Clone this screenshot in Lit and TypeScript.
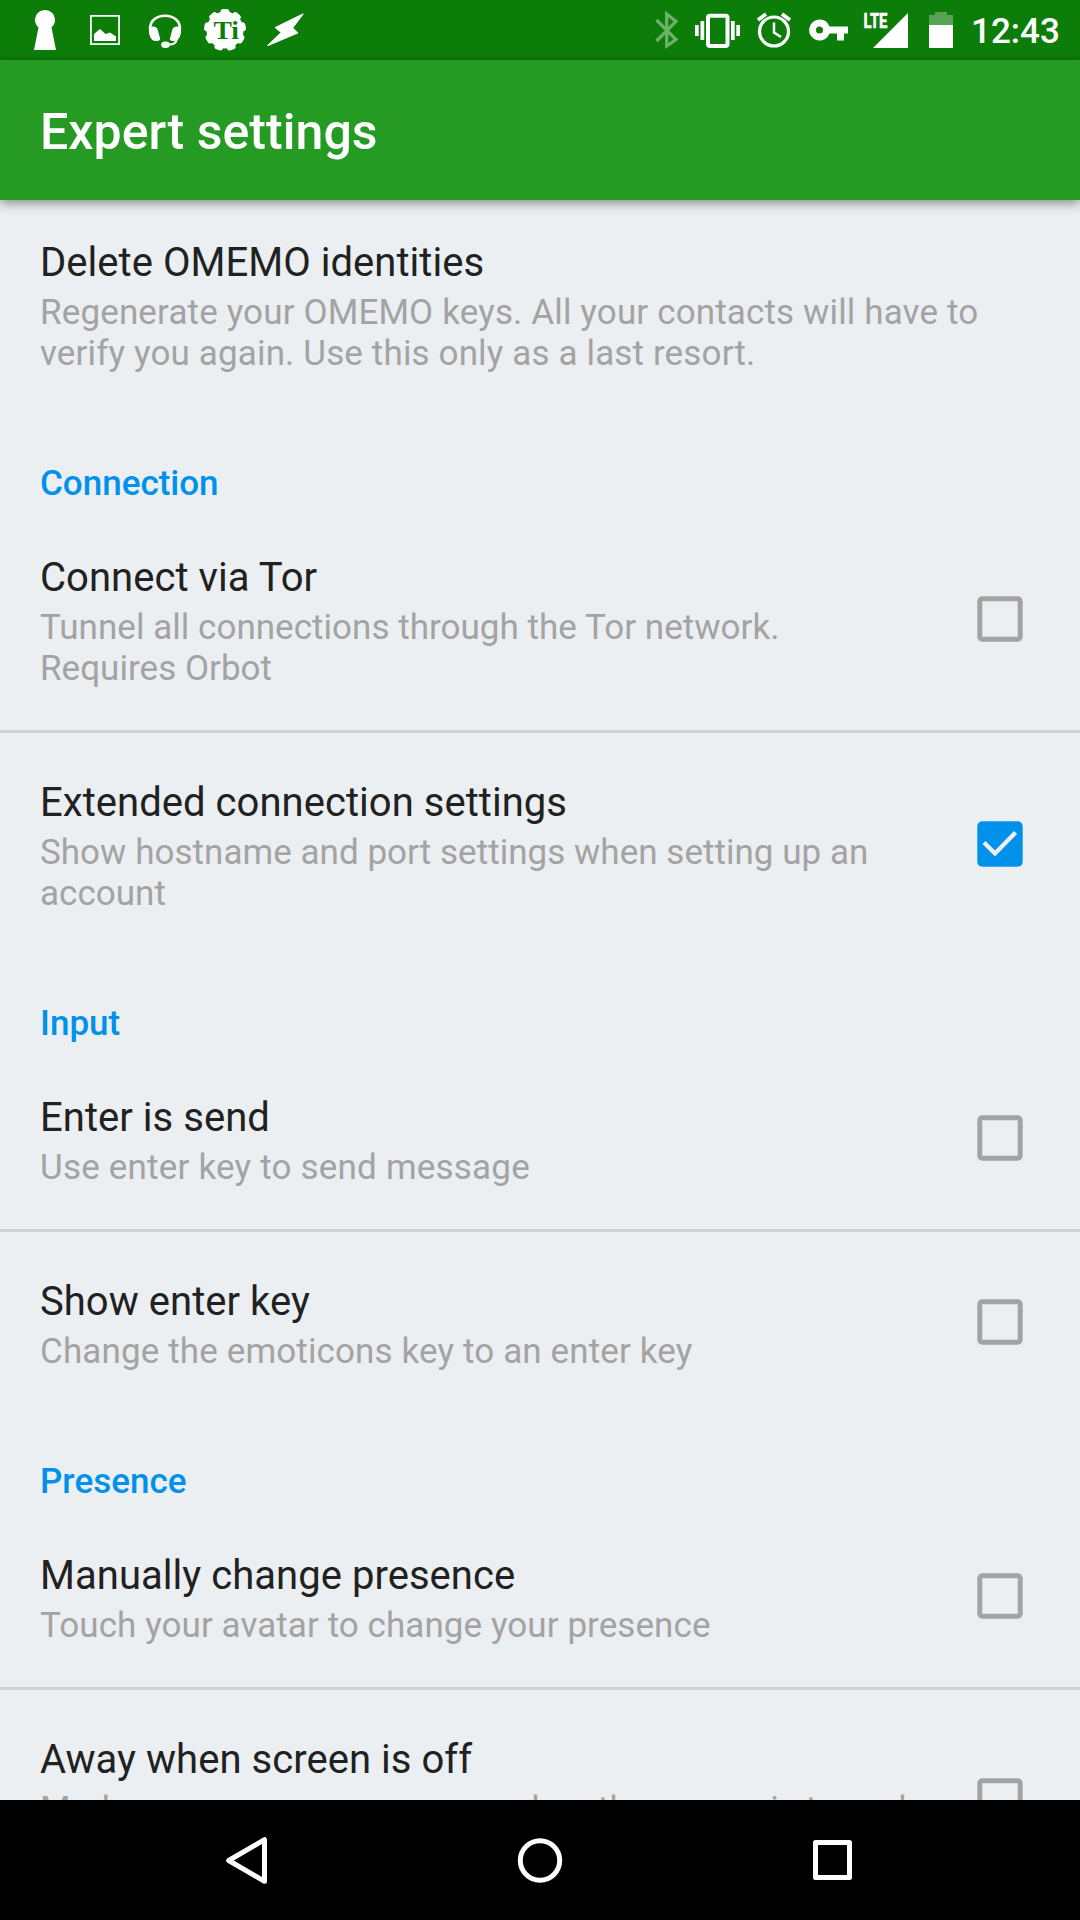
import { LitElement, html, css, svg, nothing } from "lit";
import { customElement, property } from "lit/decorators.js";
import { styleMap } from "lit/directives/style-map.js";

interface Setting {
  title: string;
  summary: string;
  tracking: number;
  checked?: boolean;
}

interface Section {
  heading?: string;
  items: Setting[];
}

const SECTIONS: Section[] = [
  {
    items: [
      {
        title: "Delete OMEMO identities",
        summary:
          "Regenerate your OMEMO keys. All your contacts will have to verify you again. Use this only as a last resort.",
        tracking: 0.14,
      },
    ],
  },
  {
    heading: "Connection",
    items: [
      {
        title: "Connect via Tor",
        summary: "Tunnel all connections through the Tor network. Requires Orbot",
        tracking: 0.03,
        checked: false,
      },
      {
        title: "Extended connection settings",
        summary: "Show hostname and port settings when setting up an account",
        tracking: 0.03,
        checked: true,
      },
    ],
  },
  {
    heading: "Input",
    items: [
      {
        title: "Enter is send",
        summary: "Use enter key to send message",
        tracking: 0.2,
        checked: false,
      },
      {
        title: "Show enter key",
        summary: "Change the emoticons key to an enter key",
        tracking: 0.13,
        checked: false,
      },
    ],
  },
  {
    heading: "Presence",
    items: [
      {
        title: "Manually change presence",
        summary: "Touch your avatar to change your presence",
        tracking: 0.07,
        checked: false,
      },
      {
        title: "Away when screen is off",
        summary: "Marks your resource as away when the screen is turned off",
        tracking: 0.12,
        checked: false,
      },
    ],
  },
];

const gearTeeth = Array.from({ length: 9 }, (_, i) => i * 40);

@customElement("status-bar")
export class StatusBar extends LitElement {
  static styles = css`
    :host {
      display: flex;
      justify-content: space-between;
      height: 60px;
      background: #0d7d0a;
      color: #fff;
    }
    .icons {
      display: block;
      height: 60px;
      fill: #fff;
    }
    .gear {
      font: bold 26px "Liberation Serif", serif;
      fill: #0d7d0a;
    }
    .lte {
      font: 700 21px Roboto, sans-serif;
      stroke: #fff;
      stroke-width: 0.6px;
    }
    .right {
      display: flex;
    }
    .clock {
      width: 109px;
      font: 500 35px/60px Roboto, sans-serif;
      padding-top: 2px;
      box-sizing: border-box;
    }
  `;

  render() {
    return html`
      <svg class="icons" width="340" viewBox="0 0 340 60">
        <path d="M45 10a10 10 0 0 1 6.500 17.500L56 50H34l4.500-22.500A10 10 0 0 1 45 10z" />
        <path fill-rule="evenodd" d="M90 15h30v30H90zM91.800 16.800v26.400h26.400V16.800z" />
        <path d="M94 41v-7l6-5 5.500 5 4.500-1.500 6 4V41z" />
        <path d="M150.200 30c-2-19 31.600-19 29.600 0" fill="none" stroke="#fff" stroke-width="2.600" />
        <path d="M151.500 27l-2.500 2.500c-.5 5 2 11.500 6.500 11.500 4.500 0 5.500-1 4-4.500l-2-7.500c-1-2-4-3-6-2z" />
        <path d="M178.500 27l2.500 2.500c.5 5-2 11.500-6.500 11.500-4.500 0-5.500-1-4-4.500l2-7.500c1-2 4-3 6-2z" />
        <path d="M177 39c-.5 3.500-3.500 5.500-8 5.500" fill="none" stroke="#fff" stroke-width="1.800" />
        <ellipse cx="165.500" cy="44.700" rx="4.300" ry="3.200" />
        <circle cx="225" cy="30" r="18.500" />
        ${gearTeeth.map(
          (a) => svg`<rect x="220.500" y="9" width="9" height="11" rx="3" transform="rotate(${a} 225 30)" />`
        )}
        <text class="gear" x="213.500" y="39" textLength="25.500" lengthAdjust="spacingAndGlyphs">Ti</text>
        <path
          d="M303 14L275.500 27.500l6 5-13.500 13 29.500-12.500-5-5z"
          stroke="#fff"
          stroke-width="1.200"
          stroke-linejoin="round"
        />
      </svg>
      <div class="right">
        <svg class="icons" width="341" viewBox="630 0 341 60">
          <path
            d="M656.500 20l19.500 19.500-9.300 6.500V14l9.300 7.500-19.500 19.500"
            fill="none"
            stroke="#fff"
            stroke-width="3.200"
            opacity=".4"
          />
          <rect x="708" y="15.700" width="19.500" height="30.300" rx="2" fill="none" stroke="#fff" stroke-width="4" />
          <path d="M695 25h3.700v11H695zM700.500 21h3.700v19h-3.700zM731 21h3.700v19H731zM736.300 25h3.700v11h-3.700z" />
          <g fill="none" stroke="#fff" stroke-width="3.200">
            <circle cx="774" cy="31.500" r="14.500" />
            <path d="M774 22.500v10l7 4.500" stroke-width="2.500" />
            <path d="M758 20l8-6M790 20l-8-6" stroke-width="3.700" />
          </g>
          <path
            fill-rule="evenodd"
            d="M819.500 19.500a10.500 10.500 0 0 1 10 7H848v7h-4v7h-7v-7h-7.500a10.500 10.500 0 1 1-10-14zm0 7a3.500 3.500 0 1 0 0 7 3.500 3.500 0 1 0 0-7z"
          />
          <text class="lte" x="863.500" y="28.300" textLength="24" lengthAdjust="spacingAndGlyphs">LTE</text>
          <path d="M908 13v35h-35z" />
          <path d="M929 25V15h6v-3h12v3h6v10z" opacity=".3" />
          <path d="M929 25h24v23h-24z" />
        </svg>
        <div class="clock">12:43</div>
      </div>
    `;
  }
}

@customElement("check-box")
export class CheckBox extends LitElement {
  @property({ type: Boolean }) checked = false;

  static styles = css`
    :host {
      display: block;
      width: 46px;
      height: 46px;
    }
    svg {
      display: block;
    }
  `;

  render() {
    return html`<svg width="46" height="46" viewBox="0 0 46 46">
      ${this.checked
        ? svg`<rect x=".3" y=".3" width="45.400" height="45.400" rx="5" fill="#0091ea" />
            <path d="M7 21.500l11 11 20.500-21" fill="none" stroke="#ebeff2" stroke-width="4.300" />`
        : svg`<rect x="2.800" y="2.800" width="40.400" height="40.400" rx="2.500" fill="none" stroke="#a3a3a3" stroke-width="5" />`}
    </svg>`;
  }
}

@customElement("setting-row")
export class SettingRow extends LitElement {
  @property({ attribute: false }) item!: Setting;

  static styles = css`
    :host {
      display: flex;
      align-items: center;
      justify-content: space-between;
      padding: 42px 57px 41px 40px;
    }
    .text {
      flex: 1;
    }
    .title {
      font-size: 40px;
      line-height: 53px;
      letter-spacing: 0.04px;
      color: #212121;
    }
    .summary {
      padding-top: 3px;
      font-size: 35px;
      line-height: 41px;
      color: #a3a3a3;
    }
    .box {
      margin: 0 0 3px 55px;
    }
  `;

  render() {
    const { title, summary, tracking, checked } = this.item;
    return html`
      <div class="text">
        <div class="title">${title}</div>
        <div class="summary" style=${styleMap({ letterSpacing: `${tracking}px` })}>${summary}</div>
      </div>
      ${checked === undefined ? nothing : html`<check-box class="box" ?checked=${checked}></check-box>`}
    `;
  }
}

@customElement("app-root")
export class AppRoot extends LitElement {
  static styles = css`
    :host {
      display: flex;
      flex-direction: column;
      width: 1080px;
      height: 1920px;
      overflow: hidden;
      background: #ebeff2;
      font-family: Roboto, sans-serif;
    }
    .toolbar {
      flex: none;
      height: 140px;
      padding-left: 40px;
      box-sizing: border-box;
      background: #259b24;
      color: #fff;
      font-size: 50px;
      font-weight: 500;
      letter-spacing: 0.06px;
      line-height: 145px;
      box-shadow: 0 3px 10px rgba(0, 0, 0, 0.42);
      z-index: 1;
    }
    .list {
      flex: 1;
      min-height: 0;
      overflow: hidden;
    }
    .sections {
      margin-top: -6px;
    }
    .heading {
      height: 94px;
      box-sizing: border-box;
      padding: 48px 40px 0;
      font-size: 35px;
      font-weight: 500;
      line-height: 41px;
      color: #0091ea;
    }
    .divided {
      border-top: 3px solid #cdd1d4;
      padding-top: 43px;
    }
    .nav {
      flex: none;
      display: flex;
      justify-content: center;
      gap: 92px;
      height: 120px;
      background: #000;
    }
    .nav svg {
      display: block;
      width: 200px;
      height: 120px;
      fill: none;
      stroke: #fff;
      stroke-width: 5px;
      stroke-linejoin: round;
    }
  `;

  render() {
    return html`
      <status-bar></status-bar>
      <div class="toolbar">Expert settings</div>
      <div class="list">
        <div class="sections">
          ${SECTIONS.map(
            (section) => html`
              ${section.heading ? html`<div class="heading">${section.heading}</div>` : nothing}
              ${section.items.map(
                (item, i) => html`<setting-row class=${i > 0 ? "divided" : ""} .item=${item}></setting-row>`
              )}
            `
          )}
        </div>
      </div>
      <div class="nav">
        <svg viewBox="148 0 200 120"><path d="M264.500 39.700v41.600L228.700 60.500z" /></svg>
        <svg viewBox="440 0 200 120"><circle cx="540" cy="60.500" r="19.700" /></svg>
        <svg viewBox="732 0 200 120"><rect x="815.500" y="42.500" width="34" height="35" /></svg>
      </div>
    `;
  }
}
